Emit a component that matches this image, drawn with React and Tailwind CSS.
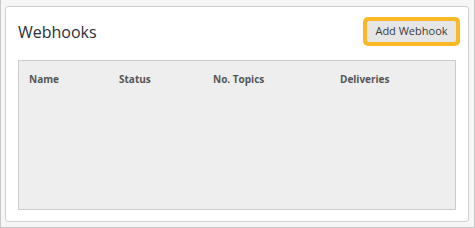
export default function App() {
  return (
    <div className="w-[475px] h-[228px] bg-[#f6f6f6] border-x border-b border-[#c8c8c8] pt-[6px] pl-[4px] pr-[5px] pb-[5px] box-border" style={{ fontFamily: '"Open Sans", sans-serif' }}>
      <div className="h-[216px] bg-white border border-[#cfcfcf] rounded-[3px] px-[12px] pt-[9px] flex flex-col">
        <div className="flex items-center justify-between h-[30px]">
          <h1 className="text-[16px] leading-none text-[#2b2e35] mt-[1px]">Webhooks</h1>
          <button className="h-[29px] px-[4px] mr-[-4px] rounded-[5px] bg-[#f9b826] flex items-center">
            <span className="h-[21px] w-[89px] bg-[#e6e6e6] rounded-[2px] flex items-center justify-center text-[11px] text-[#3a3a3a]">Add Webhook</span>
          </button>
        </div>
        <div className="mt-[14px] h-[150px] bg-[#eeeeee] border border-[#cccccc] pl-[10px] pt-[11px]">
          <div className="grid grid-cols-[90px_94px_127px_1fr] text-[10px] leading-[14px] font-bold text-[#555555]">
            <div>Name</div>
            <div>Status</div>
            <div>No. Topics</div>
            <div>Deliveries</div>
          </div>
        </div>
      </div>
    </div>
  );
}
